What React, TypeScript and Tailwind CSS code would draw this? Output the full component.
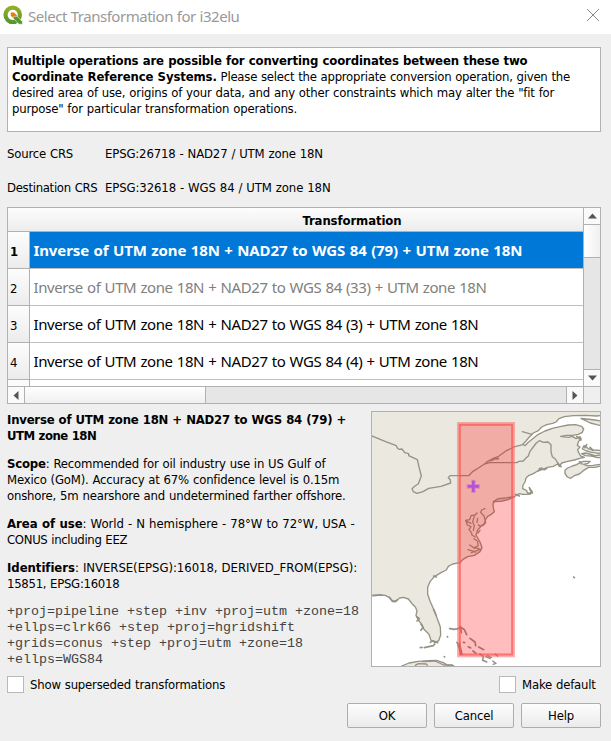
import type { ReactNode } from "react";

const operations = [
  { name: "Inverse of UTM zone 18N + NAD27 to WGS 84 (79) + UTM zone 18N", style: "bg-[#0078d7] font-bold text-white tracking-[-0.11px] [word-spacing:0.7px]" },
  { name: "Inverse of UTM zone 18N + NAD27 to WGS 84 (33) + UTM zone 18N", style: "bg-white text-[#808080] tracking-[-0.42px] [word-spacing:0.7px]" },
  { name: "Inverse of UTM zone 18N + NAD27 to WGS 84 (3) + UTM zone 18N", style: "bg-white text-black tracking-[-0.42px] [word-spacing:0.7px]" },
  { name: "Inverse of UTM zone 18N + NAD27 to WGS 84 (4) + UTM zone 18N", style: "bg-white text-black tracking-[-0.42px] [word-spacing:0.7px]" },
];

function Logo() {
  return (
    <svg className="h-5 w-5 shrink-0" viewBox="0 0 20 20">
      <defs>
        <linearGradient id="ring" x1="0" y1="0" x2="0" y2="1">
          <stop offset="0" stopColor="#93b023" />
          <stop offset="1" stopColor="#589632" />
        </linearGradient>
      </defs>
      <circle cx="9.700" cy="9.800" r="7.200" fill="white" stroke="url(#ring)" strokeWidth="4.200" />
      <path d="M10.500 11.200H14L19.500 16.800V19.200H16L10.500 13.700Z" fill="#589632" stroke="white" strokeWidth=".5" />
      <path d="M7.800 7.500H11L13.800 10.200V11.200H10.500V13.200L7.800 10.800Z" fill="#ee7913" />
    </svg>
  );
}

function Arrow({ points }: { points: string }) {
  return (
    <svg className="h-[9px] w-[9px]" viewBox="0 0 9 9">
      <polygon points={points} fill="#555" />
    </svg>
  );
}

function CheckBox({ children }: { children: ReactNode }) {
  return (
    <label className="flex h-[17px] items-center gap-[6px]">
      <span className="h-[17px] w-[17px] border border-[#b9b9b9] bg-white" />
      <span className="pt-px leading-4">{children}</span>
    </label>
  );
}

function Button({ children }: { children: ReactNode }) {
  return (
    <button className="h-[25px] w-20 rounded-[2px] border border-[#adadad] bg-linear-to-b from-[#fdfdfd] to-[#ebebeb] pt-px leading-4">
      {children}
    </button>
  );
}

function CoverageMap() {
  return (
    <svg className="h-[256px] w-[230px] border border-[#b1b1b1] bg-white" viewBox="21 21 684 762">
      <g stroke="#959286" strokeWidth="4" strokeLinejoin="round" strokeLinecap="round">
        <path
          fill="#ebe9df"
          d="M0 0H720V30L695 33L660 31L625 32L598 35L582 41L573 51L563 55L545 59L530 66L520 77L505 84L493 96L483 108L474 117L480 122L490 112L505 100L520 88L540 78L562 70L585 65L610 60L632 59L650 64L656 72L652 82L640 88L622 91L605 91L587 94L610 97L622 94L633 101L645 95L648 101L641 109L637 121L645 126L638 134L641 143L647 153L658 157L644 160L628 165L608 169L590 174L583 184L578 177L565 184L548 187L532 193L518 198L505 206L492 211L483 219L480 231L474 240L473 251L484 256L489 265L499 262L498 256L494 254L501 259L497 267L482 268L473 268L464 266L455 270L445 278L430 281L412 282L393 287L385 293L384 304L388 320L379 328L368 334L361 345L362 354L350 362L338 375L333 390L345 411L351 428L345 440L328 451L308 455L294 463L285 473L263 477L250 484L244 495L228 503L208 515L195 530L188 547L188 567L195 588L206 613L217 641L226 666L227 690L221 707L211 713L198 706L192 688L177 673L170 658L160 645L153 631L156 617L151 606L142 597L130 582L116 577L104 579L93 588L82 587L72 577L61 571L45 570L0 573Z"
        />
        <path fill="#ebe9df" d="M600 196L608 189L622 183L635 179L645 173L655 169L676 169L669 175L656 178L666 182L684 181L720 176L720 180L690 187L671 187L655 197L643 207L628 212L617 220L607 216L600 206Z" />
        <path fill="#ebe9df" d="M648 40L665 42L690 45L720 50V64L695 59L676 54Z" />
        <path fill="#ebe9df" d="M652 132L657 122L665 126L669 131L685 135L704 136L720 133V142L700 145L680 142L664 138Z" />
        <path fill="#ebe9df" d="M650 146L660 144L674 147L690 152L720 148V157L698 158L679 153L661 152Z" />
        <path fill="#ebe9df" d="M110 783L132 774L160 769L191 767L214 766L235 773L247 780L266 782V800H105Z" />
        <path fill="#c9c7bd" d="M385 290L400 281L427 278L445 275L430 284L408 289Z" />
        <path fill="none" d="M18 92L60 109L94 122L97 129L102 133L111 132L119 143L131 146L131 152L157 164L163 190L169 213L160 236L149 244L141 251L145 260L156 265L174 260L191 250L228 244L257 234L256 224L250 218L255 212H311L324 199L345 186L358 177L375 173H455L462 169L475 168L482 160L490 153L495 139L507 123L514 114L523 107L535 112L549 111L558 119L558 141L562 155L571 162L579 175" />
        <path fill="none" d="M363 172L385 160L401 154L426 136L450 125L474 119M472 80L501 88" />
        <path fill="none" d="M360 311L350 315L347 322L357 333L361 347L356 360L345 364L340 359M336 324L330 330L318 332L314 344L302 346L307 360L318 365L312 374L319 382L321 390L330 396M328 334L323 350L328 362L325 376M338 340L336 352M306 349L318 355M345 376L339 384" />
        <path fill="none" d="M327 401L338 409L339 423L329 427L346 433L319 443M314 420L329 430M309 434L332 441" />
        <path fill="none" d="M393 162L400 161M377 167L395 159M523 191L538 194L545 190M520 197L530 189M452 268L463 273M493 248L502 264M579 176L588 185M644 170L651 177M665 119L660 128M635 94L648 105M675 127L684 136M206 513L214 516M206 613L213 630M155 635L163 641L156 648M168 658L174 667L168 676M196 712L204 707L218 713M209 717L205 722L178 728M166 728L171 727M73 577L82 589L91 590L97 585M25 572L50 570" strokeWidth="5" />
        <path fill="none" d="M257 671L267 673L280 671L286 666L298 674L305 689M254 671L260 672M286 665L289 683M315 700L330 711L332 722M341 726L356 734M295 712L299 713M310 725L317 729M324 738L333 745M345 747L355 754L353 766L365 771M363 755L375 760M247 695L248 696M238 755L239 756M626 516L628 518M276 712L283 728L288 749M283 714L291 748M279 721L290 746" strokeWidth="5" />
        <path fill="none" d="M151 781L160 776L184 777L187 781M173 770L210 768L236 780L262 780M383 768L393 775L384 778M391 747L398 754M367 751L379 758" />
      </g>
      <rect x="282" y="57" width="162" height="694" fill="#ff0000" fillOpacity=".26" />
      <rect x="282" y="57" width="162" height="694" fill="none" stroke="#ff6464" strokeOpacity=".5" strokeWidth="12" />
      <rect x="284" y="59" width="158" height="690" fill="none" stroke="#f64f4f" strokeOpacity=".45" strokeWidth="6" />
      <g fill="none">
        <path d="M305 244H345M325 224V264" stroke="#a845e0" strokeOpacity=".3" strokeWidth="14" />
        <path d="M308 244H342M325 227V261" stroke="#b552d6" strokeWidth="8" />
      </g>
    </svg>
  );
}

export default function App() {
  return (
    <div className="flex h-[741px] w-[611px] flex-col bg-[#efefef] font-['DejaVu_Sans_Condensed','DejaVu_Sans',sans-serif] text-[13px] leading-4 tracking-[-0.19px] [word-spacing:0.4px] whitespace-nowrap text-black">
      <header className="flex h-[34px] items-center bg-white pr-[11px] pb-1 pl-[3px]">
        <Logo />
        <h1 className="ml-[5px] flex-1 pt-px font-['Noto_Sans',sans-serif] text-[15px] leading-5 tracking-[-0.47px] text-[#999]">
          Select Transformation for i32elu
        </h1>
        <svg className="h-[14px] w-[14px]" viewBox="0 0 14 14">
          <path d="M1 1L13 13M13 1L1 13" stroke="#8a8a8a" fill="none" />
        </svg>
      </header>

      <main className="flex flex-col px-[7px] pt-[13px]">
        <p className="h-[85px] w-[594px] border border-[#b1b1b1] bg-white px-1 pt-[5px]">
          <b className="tracking-[-0.15px]">Multiple operations are possible for converting coordinates between these two</b>
          <br />
          <b className="tracking-[-0.13px]">Coordinate Reference Systems.</b>
          <span className="tracking-[-0.24px]"> Please select the appropriate conversion operation, given the</span>
          <br />
          desired area of use, origins of your data, and any other constraints which may alter the "fit for
          <br />
          purpose" for particular transformation operations.
        </p>

        <dl className="mt-[14px] grid grid-cols-[98px_1fr] gap-y-[18px]">
          <dt>Source CRS</dt>
          <dd className="tracking-[-0.15px]">EPSG:26718 - NAD27 / UTM zone 18N</dd>
          <dt className="tracking-[-0.3px]">Destination CRS</dt>
          <dd className="tracking-[-0.11px]">EPSG:32618 - WGS 84 / UTM zone 18N</dd>
        </dl>

        <section className="mt-[11px] flex h-[197px] w-[594px] flex-col border border-[#b1b1b1] bg-white">
          <div className="flex h-[178px]">
            <div className="flex w-[575px] flex-col overflow-hidden">
              <div className="flex h-6 shrink-0 justify-center border-b border-[#b1b1b1] bg-linear-to-b from-[#fdfdfd] to-[#ececec] pt-[5px] pl-[113px] font-bold tracking-[-0.1px]">
                Transformation
              </div>
              {operations.map((op, i) => (
                <div key={i} className="flex h-[37px] shrink-0">
                  <span
                    className={
                      "flex w-[22px] items-center border-r border-b border-[#b1b1b1] bg-linear-to-b from-[#fdfdfd] to-[#ececec] pt-[3px] pl-[2px] " +
                      (i === 0 ? "font-bold" : "")
                    }
                  >
                    {i + 1}
                  </span>
                  <span
                    className={
                      "flex flex-1 items-center border-b border-[#c0c0c0] pl-[3.5px] font-['Noto_Sans',sans-serif] text-[15px] " +
                      op.style
                    }
                  >
                    {op.name}
                  </span>
                </div>
              ))}
              <div className="h-2 w-[22px] border-r border-[#b1b1b1] bg-[#fbfbfb]" />
            </div>
            <div className="flex w-[17px] flex-col border-l border-[#b1b1b1] bg-[#e6e6e6]">
              <div className="flex h-[17px] items-center justify-center border-b border-[#b1b1b1] bg-[#fafafa]">
                <Arrow points="0,6.500 4.500,1.500 9,6.500" />
              </div>
              <div className="h-[33px] border-b border-[#b1b1b1] bg-linear-to-r from-white to-[#f0f0f0]" />
              <div className="mt-auto flex h-[17px] items-center justify-center border-t border-[#b1b1b1] bg-[#fafafa]">
                <Arrow points="0,1.500 4.500,6.500 9,1.500" />
              </div>
            </div>
          </div>
          <div className="flex h-[17px] border-t border-[#b1b1b1] bg-[#e6e6e6]">
            <div className="flex w-[17px] items-center justify-center border-r border-[#b1b1b1] bg-[#fafafa]">
              <Arrow points="6.500,0 1.500,4.500 6.500,9" />
            </div>
            <div className="w-[181px] border-r border-[#b1b1b1] bg-linear-to-b from-white to-[#f0f0f0]" />
            <div className="ml-auto flex w-[17px] items-center justify-center border-l border-[#b1b1b1] bg-[#fafafa]">
              <Arrow points="1.500,0 6.500,4.500 1.500,9" />
            </div>
            <div className="w-[17px] border-l border-[#b1b1b1] bg-[#efefef]" />
          </div>
        </section>

        <section className="mt-[7px] flex h-[256px]">
          <div className="flex w-[364px] flex-col gap-3 pt-[1px]">
            <p className="font-bold">
              <span className="tracking-[-0.22px]">Inverse of UTM zone 18N + NAD27 to WGS 84 (79) +</span>
              <br />
              <span className="tracking-[-0.5px]">UTM zone 18N</span>
            </p>
            <p>
              <b>Scope</b>: Recommended for oil industry use in US Gulf of
              <br />
              Mexico (GoM). Accuracy at 67% confidence level is 0.15m
              <br />
              onshore, 5m nearshore and undetermined farther offshore.
            </p>
            <p>
              <span className="tracking-[-0.03px]">
                <b>Area of use</b>: World - N hemisphere - 78°W to 72°W, USA -
              </span>
              <br />
              <span className="tracking-[-0.33px]">CONUS including EEZ</span>
            </p>
            <p>
              <span className="tracking-[-0.04px]">
                <b>Identifiers</b>: INVERSE(EPSG):16018, DERIVED_FROM(EPSG):
              </span>
              <br />
              <span className="tracking-[-0.28px]">15851, EPSG:16018</span>
            </p>
            <p className="font-['Liberation_Mono',monospace] text-[13.33px] tracking-normal text-[#444] [word-spacing:0px]">
              +proj=pipeline +step +inv +proj=utm +zone=18
              <br />
              +ellps=clrk66 +step +proj=hgridshift
              <br />
              +grids=conus +step +proj=utm +zone=18
              <br />
              +ellps=WGS84
            </p>
          </div>
          <CoverageMap />
        </section>

        <div className="mt-[9px] flex">
          <div className="flex-1">
            <CheckBox>Show superseded transformations</CheckBox>
          </div>
          <div className="w-[105px]">
            <CheckBox>Make default</CheckBox>
          </div>
        </div>

        <footer className="mt-[10px] flex justify-end gap-[7px] pr-[3px]">
          <Button>OK</Button>
          <Button>Cancel</Button>
          <Button>Help</Button>
        </footer>
      </main>
    </div>
  );
}
